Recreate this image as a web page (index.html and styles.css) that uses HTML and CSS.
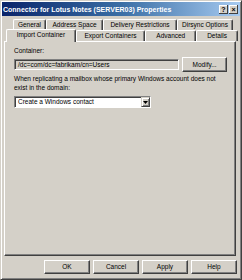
FILE: index.html
```html
<!DOCTYPE html>
<html>
<head>
<meta charset="utf-8">
<link rel="stylesheet" href="styles.css">
</head>
<body>
<div class="window">
  <div class="titlebar">
    <span class="title">Connector for Lotus Notes (SERVER03) Properties</span>
    <div class="tbtns">
      <span class="tbtn">?</span>
      <span class="tbtn x">×</span>
    </div>
  </div>
  <div class="content">
    <div class="tabs">
      <div class="tabrow back">
        <div class="tab w-gen">General</div>
        <div class="tab w-addr">Address Space</div>
        <div class="tab w-del">Delivery Restrictions</div>
        <div class="tab w-dir">Dirsync Options</div>
      </div>
      <div class="tabrow front">
        <div class="tab sel w-imp">Import Container</div>
        <div class="tab w-exp">Export Containers</div>
        <div class="tab w-adv">Advanced</div>
        <div class="tab w-det">Details</div>
      </div>
    </div>
    <div class="panel">
      <div class="label">Container:</div>
      <div class="row">
        <div class="field">/dc=com/dc=fabrikam/cn=Users</div>
        <div class="btn modify">Modify...</div>
      </div>
      <div class="para">When replicating a mailbox whose primary Windows account does not exist in the domain:</div>
      <div class="combo">
        <span class="ctext">Create a Windows contact</span>
        <span class="carrow"><svg width="5" height="3" viewBox="0 0 5 3"><path d="M0 0H5L2.5 3Z" fill="#000"/></svg></span>
      </div>
    </div>
    <div class="buttons">
      <div class="btn db">OK</div>
      <div class="btn db">Cancel</div>
      <div class="btn db">Apply</div>
      <div class="btn db">Help</div>
    </div>
  </div>
</div>
</body>
</html>
```
FILE: styles.css
```css
html, body {
  margin: 0;
  padding: 0;
  background: #d4d0c8;
}
body {
  font-family: "Liberation Sans", Arial, sans-serif;
  font-size: 6.5px;
  color: #000;
}
.window {
  width: 242px;
  height: 280px;
  box-sizing: border-box;
  background: #d4d0c8;
  border-left: 1px solid #d4d0c8;
  border-top: 1px solid #d4d0c8;
  border-right: 1px solid #404040;
  border-bottom: 1px solid #404040;
  box-shadow: inset 1px 1px 0 #fff, inset -1px -1px 0 #808080;
  padding: 1px;
  display: flex;
  flex-direction: column;
}
.titlebar {
  height: 14px;
  background: linear-gradient(90deg, #0a246a, #3a6ea5 50%, #a6caf0);
  display: flex;
  align-items: center;
  justify-content: space-between;
  padding: 0 2px 0 1px;
}
.title {
  color: #fff;
  font-weight: bold;
  font-size: 7px;
  white-space: nowrap;
}
.tbtns {
  display: flex;
  gap: 1px;
}
.tbtn {
  width: 9px;
  height: 9px;
  background: #d4d0c8;
  box-shadow: inset -1px -1px 0 #404040, inset 1px 1px 0 #fff;
  font-size: 7px;
  font-weight: bold;
  line-height: 9px;
  text-align: center;
}
.content {
  flex: 1;
  display: flex;
  flex-direction: column;
  padding: 3px 2px 0 2px;
}
.tabs {
  display: flex;
  flex-direction: column;
}
.tabrow {
  display: flex;
  height: 11px;
}
.tabrow.back {
  padding-left: 9px;
}
.tabrow.front {
  padding-left: 2px;
  position: relative;
  z-index: 1;
}
.tab {
  box-sizing: border-box;
  height: 11px;
  border-top: 1px solid #fff;
  border-left: 1px solid #fff;
  border-right: 1px solid #404040;
  box-shadow: inset -1px 0 0 #808080;
  border-radius: 2px 2px 0 0;
  text-align: center;
  line-height: 10px;
  white-space: nowrap;
}
.tab.sel {
  height: 13px;
  margin-top: -1px;
  margin-bottom: -1px;
  background: #d4d0c8;
  line-height: 10px;
}
.w-gen { width: 33px; }
.w-addr { width: 57px; }
.w-del { width: 74px; }
.w-dir { width: 56px; }
.w-imp { width: 70px; }
.w-exp { width: 70px; }
.w-adv { width: 51px; }
.w-det { width: 42px; }
.panel {
  height: 215px;
  box-sizing: border-box;
  margin-right: 2px;
  border-top: 1px solid #fff;
  border-left: 1px solid #fff;
  border-right: 1px solid #404040;
  border-bottom: 1px solid #404040;
  box-shadow: inset -1px -1px 0 #808080;
  padding: 5px 8px 0 9px;
  display: flex;
  flex-direction: column;
}
.label {
  line-height: 8px;
  margin-bottom: 2px;
}
.row {
  display: flex;
  align-items: center;
  gap: 3px;
}
.field {
  width: 166px;
  height: 11px;
  box-sizing: border-box;
  border-top: 1px solid #808080;
  border-left: 1px solid #808080;
  border-right: 1px solid #fff;
  border-bottom: 1px solid #fff;
  box-shadow: inset 1px 1px 0 #404040;
  line-height: 9px;
  padding-left: 3px;
}
.btn {
  box-sizing: border-box;
  background: #d4d0c8;
  border-top: 1px solid #fff;
  border-left: 1px solid #fff;
  border-right: 1px solid #404040;
  border-bottom: 1px solid #404040;
  box-shadow: inset -1px -1px 0 #808080;
  text-align: center;
}
.modify {
  width: 45px;
  height: 15px;
  line-height: 13px;
}
.para {
  margin-top: 3px;
  line-height: 8.5px;
  width: 205px;
}
.combo {
  margin-top: 4px;
  width: 137px;
  height: 12px;
  box-sizing: border-box;
  background: #fff;
  border-top: 1px solid #808080;
  border-left: 1px solid #808080;
  border-right: 1px solid #fff;
  border-bottom: 1px solid #fff;
  box-shadow: inset 1px 1px 0 #404040;
  display: flex;
  align-items: center;
  justify-content: space-between;
}
.ctext {
  padding-left: 3px;
  line-height: 10px;
}
.carrow {
  width: 9px;
  height: 10px;
  box-sizing: border-box;
  background: #d4d0c8;
  border-top: 1px solid #d4d0c8;
  border-left: 1px solid #d4d0c8;
  border-right: 1px solid #404040;
  border-bottom: 1px solid #404040;
  box-shadow: inset 1px 1px 0 #fff, inset -1px -1px 0 #808080;
  display: flex;
  align-items: center;
  justify-content: center;
}
.buttons {
  display: flex;
  justify-content: flex-end;
  gap: 3px;
  padding: 4px 1px 0 0;
}
.db {
  width: 46px;
  height: 14px;
  line-height: 12px;
}
```
